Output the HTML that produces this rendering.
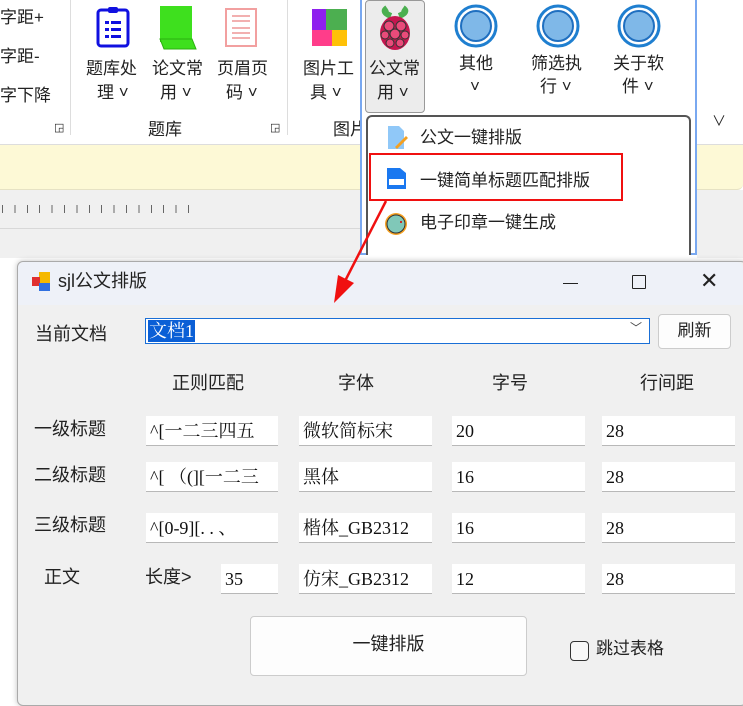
<!DOCTYPE html>
<html><head><meta charset="utf-8"><style>
*{margin:0;padding:0;box-sizing:border-box}
body{width:743px;height:701px;overflow:hidden;background:#fff;position:relative;font-family:"Liberation Sans","Noto Sans CJK SC",sans-serif;color:#222}
.a{position:absolute}
.t{position:absolute;font-size:17px;white-space:nowrap;line-height:1}
.in{position:absolute;background:#fff;border-bottom:1px solid #b8b8b8;height:30px;font-family:"Liberation Serif","Noto Serif CJK SC",serif;font-size:18px;line-height:30px;padding-left:4px;overflow:hidden;white-space:nowrap;color:#111}
.lb{position:absolute;font-size:18px;white-space:nowrap;line-height:1;color:#222}
</style></head><body>
<!-- ribbon -->
<div class="a" style="left:0;top:0;width:743px;height:145px;background:#fff;border-bottom:1px solid #ddd"></div>
<div class="t" style="left:0;top:9px">字距+</div>
<div class="t" style="left:0;top:48px">字距-</div>
<div class="t" style="left:0;top:87px">字下降</div>
<div class="a" style="left:70px;top:0;width:1px;height:135px;background:#ddd"></div>
<div class="a" style="left:287px;top:0;width:1px;height:135px;background:#ddd"></div>
<div class="a" style="left:437px;top:0;width:1px;height:110px;background:#ddd"></div>
<div class="a" style="left:519px;top:0;width:1px;height:110px;background:#ddd"></div>
<div class="a" style="left:600px;top:0;width:1px;height:110px;background:#ddd"></div>
<div class="a" style="left:681px;top:0;width:1px;height:110px;background:#ddd"></div>
<!-- icons -->
<svg class="a" style="left:96px;top:6px" width="36" height="42"><rect x="2" y="4" width="30" height="36" rx="3" fill="none" stroke="#1010e0" stroke-width="3"/><rect x="12" y="1" width="10" height="6" rx="2" fill="#1010e0"/><g fill="#1010e0"><rect x="9" y="15" width="4" height="3"/><rect x="15" y="15" width="10" height="3"/><rect x="9" y="22" width="4" height="3"/><rect x="15" y="22" width="10" height="3"/><rect x="9" y="29" width="4" height="3"/><rect x="15" y="29" width="10" height="3"/></g></svg>
<svg class="a" style="left:156px;top:5px" width="44" height="46"><rect x="4" y="1" width="32" height="36" fill="#3ee01e"/><path d="M4 34 L36 34 L40 44 L8 44 Z" fill="#3ee01e" stroke="#2bb010"/></svg>
<svg class="a" style="left:224px;top:8px" width="34" height="40"><rect x="2" y="1" width="30" height="37" fill="#fff" stroke="#f2a0a0" stroke-width="2"/><g stroke="#f2b0b0" stroke-width="2"><line x1="8" y1="8" x2="26" y2="8"/><line x1="8" y1="13" x2="26" y2="13"/><line x1="8" y1="20" x2="26" y2="20"/><line x1="8" y1="25" x2="26" y2="25"/><line x1="8" y1="30" x2="26" y2="30"/></g></svg>
<svg class="a" style="left:312px;top:9px" width="36" height="38"><rect x="0" y="0" width="14" height="21" fill="#8e20ee"/><rect x="14" y="0" width="21" height="21" fill="#4caf50"/><rect x="0" y="21" width="20" height="16" fill="#ff3d8a"/><rect x="20" y="21" width="15" height="16" fill="#ffc107"/></svg>
<div class="t" style="left:86px;top:60px">题库处</div><div class="t" style="left:97px;top:84px">理 ˅</div>
<div class="t" style="left:152px;top:60px">论文常</div><div class="t" style="left:160px;top:84px">用 ˅</div>
<div class="t" style="left:217px;top:60px">页眉页</div><div class="t" style="left:226px;top:84px">码 ˅</div>
<div class="t" style="left:303px;top:60px">图片工</div><div class="t" style="left:310px;top:84px">具 ˅</div>
<div class="t" style="left:148px;top:121px">题库</div>
<div class="t" style="left:333px;top:121px">图片</div>
<div class="t" style="left:54px;top:123px;font-size:11px">◲</div>
<div class="t" style="left:270px;top:123px;font-size:11px">◲</div>
<!-- highlight panel -->
<div class="a" style="left:360px;top:-2px;width:337px;height:257px;border:2px solid #79a8f0;background:#fff"></div>
<div class="a" style="left:365px;top:0;width:60px;height:113px;background:#ececec;border:1px solid #999;border-radius:4px"></div>
<svg class="a" style="left:377px;top:4px" width="36" height="46"><path d="M10 4 Q4 8 14 12 M26 4 Q32 8 22 12" stroke="#4caf50" stroke-width="6" fill="#4caf50"/><ellipse cx="18" cy="29" rx="15" ry="17" fill="#c5164f"/><g fill="#e94b7a" stroke="#333" stroke-width="1"><circle cx="12" cy="22" r="5"/><circle cx="24" cy="22" r="5"/><circle cx="8" cy="31" r="4"/><circle cx="18" cy="30" r="5"/><circle cx="28" cy="31" r="4"/><circle cx="13" cy="39" r="4"/><circle cx="23" cy="39" r="4"/></g></svg>
<div class="t" style="left:369px;top:60px">公文常</div><div class="t" style="left:377px;top:84px">用 ˅</div>
<svg class="a" style="left:453px;top:3px" width="46" height="46"><circle cx="23" cy="23" r="20" fill="#fff" stroke="#1f7fd0" stroke-width="3"/><circle cx="23" cy="23" r="15" fill="#7fb8e8" stroke="#1f6fc0" stroke-width="2"/></svg>
<svg class="a" style="left:535px;top:3px" width="46" height="46"><circle cx="23" cy="23" r="20" fill="#fff" stroke="#1f7fd0" stroke-width="3"/><circle cx="23" cy="23" r="15" fill="#7fb8e8" stroke="#1f6fc0" stroke-width="2"/></svg>
<svg class="a" style="left:616px;top:3px" width="46" height="46"><circle cx="23" cy="23" r="20" fill="#fff" stroke="#1f7fd0" stroke-width="3"/><circle cx="23" cy="23" r="15" fill="#7fb8e8" stroke="#1f6fc0" stroke-width="2"/></svg>
<div class="t" style="left:459px;top:55px">其他</div><div class="t" style="left:470px;top:78px">˅</div>
<div class="t" style="left:531px;top:55px">筛选执</div><div class="t" style="left:540px;top:78px">行 ˅</div>
<div class="t" style="left:613px;top:55px">关于软</div><div class="t" style="left:622px;top:78px">件 ˅</div>
<div class="t" style="left:712px;top:114px;font-size:14px">∨</div>
<!-- yellow band, ruler -->
<div class="a" style="left:0;top:145px;width:360px;height:45px;background:#fdf9d6;border-bottom:1px solid #e6e2c4"></div>
<div class="a" style="left:697px;top:145px;width:46px;height:45px;background:#fdf9d6;border-bottom:1px solid #e6e2c4;border-bottom-right-radius:6px"></div>
<div class="a" style="left:0;top:190px;width:360px;height:68px;background:#f0f0f0"></div>
<div class="a" style="left:697px;top:190px;width:46px;height:68px;background:#f0f0f0"></div>
<div class="a" style="left:0;top:228px;width:360px;height:1px;background:#d8d8d8"></div>
<div class="a" style="left:2px;top:205px;width:190px;height:8px;background:repeating-linear-gradient(90deg,#666 0 1px,transparent 1px 12.4px)"></div>
<!-- dropdown menu -->
<div class="a" style="left:366px;top:115px;width:325px;height:140px;background:#fff;border:2px solid #555;border-bottom:none;border-radius:6px 6px 0 0"></div>
<svg class="a" style="left:386px;top:125px" width="24" height="26"><path d="M2 1 H13 L18 6 V24 H2 Z" fill="#90c8f8"/><path d="M9 22 L20 11 L22 13 L11 24 Z" fill="#f5a020"/></svg>
<div class="t" style="left:420px;top:129px">公文一键排版</div>
<div class="a" style="left:369px;top:153px;width:254px;height:48px;border:2px solid #f01010"></div>
<svg class="a" style="left:386px;top:167px" width="22" height="24"><path d="M1 1 H14 L20 6 V22 H1 Z" fill="#1a78f0"/><path d="M3 12 H18 V18 H3 Z" fill="#fff"/></svg>
<div class="t" style="left:420px;top:172px">一键简单标题匹配排版</div>
<svg class="a" style="left:383px;top:211px" width="26" height="26"><circle cx="13" cy="13" r="11" fill="#f5a020"/><circle cx="13" cy="13" r="9" fill="#80c8b8" stroke="#333" stroke-width="1"/><circle cx="18" cy="11" r="1" fill="#d00"/></svg>
<div class="t" style="left:420px;top:214px">电子印章一键生成</div>
<!-- window -->
<div class="a" style="left:17px;top:261px;width:730px;height:445px;background:#f0f0f0;border:1px solid #aaa;border-radius:6px;box-shadow:0 0 6px rgba(0,0,0,.25)"></div>
<div class="a" style="left:18px;top:262px;width:725px;height:43px;background:#eef1f8;border-radius:6px 6px 0 0"></div>
<svg class="a" style="left:31px;top:272px" width="20" height="20"><rect x="8" y="0" width="11" height="11" fill="#f5b800"/><rect x="1" y="5" width="8" height="9" fill="#e03030"/><rect x="8" y="11" width="11" height="8" fill="#3070e0"/></svg>
<div class="t" style="left:58px;top:272px;font-size:18px">sjl公文排版</div>
<div class="a" style="left:563px;top:283px;width:15px;height:1px;background:#222"></div>
<div class="a" style="left:632px;top:275px;width:14px;height:14px;border:1.5px solid #222;border-radius:1px"></div>
<div class="t" style="left:700px;top:270px;font-size:22px;font-weight:300">✕</div>
<!-- red arrow -->
<svg class="a" style="left:320px;top:195px" width="80" height="115"><line x1="66" y1="6" x2="24" y2="88" stroke="#f01010" stroke-width="2.5"/><path d="M14 108 L18 80 L34 88 Z" fill="#f01010"/></svg>
<!-- form -->
<div class="lb" style="left:35px;top:325px">当前文档</div>
<div class="a" style="left:145px;top:318px;width:505px;height:26px;background:#fff;border:1.5px solid #1a6fd6"></div>
<div class="a" style="left:148px;top:320px;padding:0 1px;height:22px;background:#0a5fd6;color:#fff;font-family:'Liberation Serif','Noto Serif CJK SC',serif;font-size:18px;line-height:22px;white-space:nowrap">文档1</div>
<div class="t" style="left:630px;top:322px;font-size:12px;color:#444">﹀</div>
<div class="a" style="left:658px;top:314px;width:73px;height:35px;background:#fdfdfd;border:1px solid #ccc;border-radius:4px;font-size:17px;text-align:center;line-height:31px">刷新</div>
<div class="lb" style="left:172px;top:374px">正则匹配</div>
<div class="lb" style="left:338px;top:374px">字体</div>
<div class="lb" style="left:492px;top:374px">字号</div>
<div class="lb" style="left:640px;top:374px">行间距</div>

<div class="lb" style="left:34px;top:420px">一级标题</div>
<div class="in" style="left:146px;top:416px;width:132px">^[一二三四五</div>
<div class="in" style="left:299px;top:416px;width:133px">微软简标宋</div>
<div class="in" style="left:452px;top:416px;width:133px">20</div>
<div class="in" style="left:602px;top:416px;width:133px">28</div>

<div class="lb" style="left:34px;top:466px">二级标题</div>
<div class="in" style="left:146px;top:462px;width:132px">^[ （(][一二三</div>
<div class="in" style="left:299px;top:462px;width:133px">黑体</div>
<div class="in" style="left:452px;top:462px;width:133px">16</div>
<div class="in" style="left:602px;top:462px;width:133px">28</div>

<div class="lb" style="left:34px;top:516px">三级标题</div>
<div class="in" style="left:146px;top:513px;width:132px">^[0-9][. . 、</div>
<div class="in" style="left:299px;top:513px;width:133px">楷体_GB2312</div>
<div class="in" style="left:452px;top:513px;width:133px">16</div>
<div class="in" style="left:602px;top:513px;width:133px">28</div>

<div class="lb" style="left:44px;top:568px">正文</div>
<div class="lb" style="left:145px;top:568px">长度&gt;</div>
<div class="in" style="left:221px;top:564px;width:57px">35</div>
<div class="in" style="left:299px;top:564px;width:133px">仿宋_GB2312</div>
<div class="in" style="left:452px;top:564px;width:133px">12</div>
<div class="in" style="left:602px;top:564px;width:133px">28</div>

<div class="a" style="left:250px;top:616px;width:277px;height:60px;background:#fdfdfd;border:1px solid #ccc;border-radius:4px;font-size:18px;text-align:center;line-height:54px">一键排版</div>
<div class="a" style="left:570px;top:641px;width:19px;height:20px;border:1.5px solid #333;border-radius:4px;background:#f8f8f8"></div>
<div class="lb" style="left:596px;top:640px;font-size:17px">跳过表格</div>
</body></html>
